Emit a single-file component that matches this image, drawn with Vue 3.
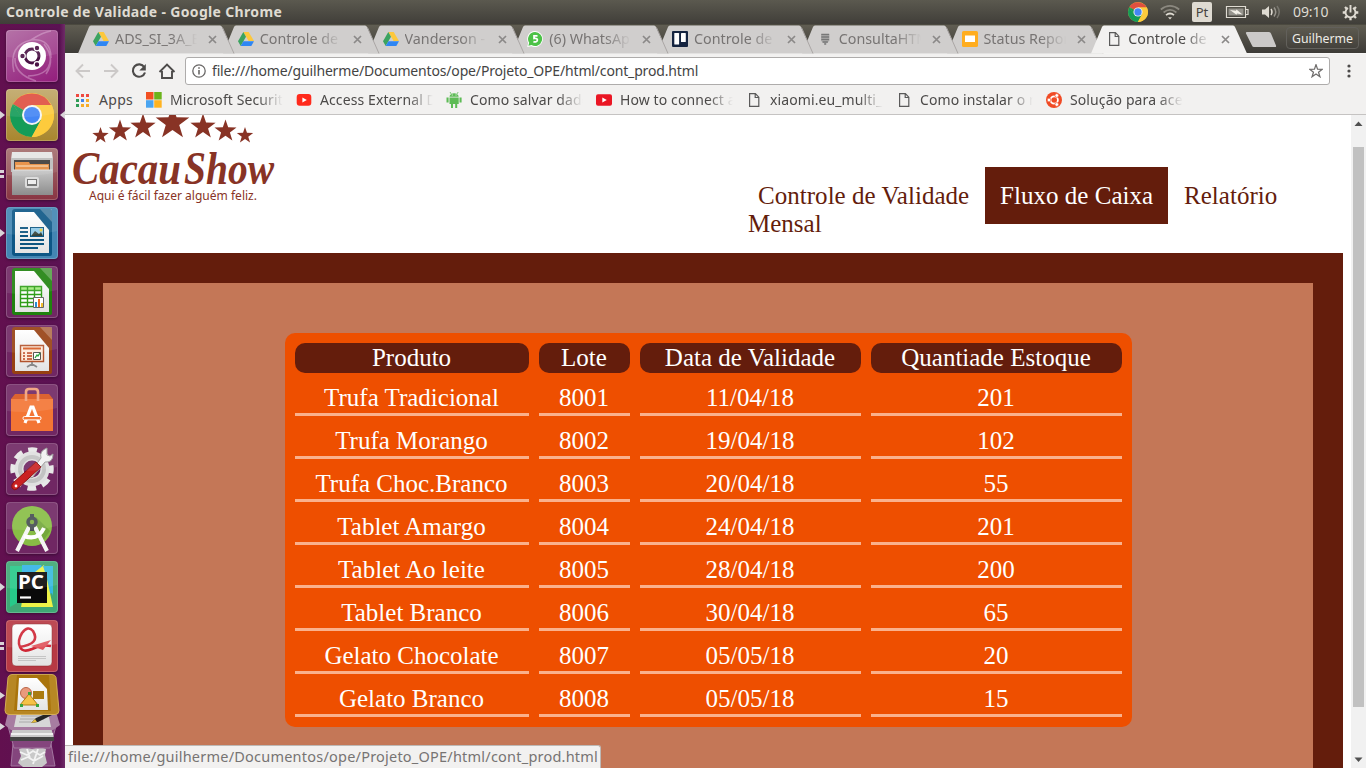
<script setup>
const tabs = [
  { title: 'ADS_SI_3A_B', icon: 'drive' },
  { title: 'Controle de V', icon: 'drive' },
  { title: 'Vanderson - G', icon: 'drive' },
  { title: '(6) WhatsApp', icon: 'whats' },
  { title: 'Controle de V', icon: 'trello' },
  { title: 'ConsultaHTM', icon: 'shield' },
  { title: 'Status Repor', icon: 'slides' },
  { title: 'Controle de V', icon: 'doc', active: true }
]
const bookmarks = [
  { title: 'Microsoft Securit', icon: 'ms' },
  { title: 'Access External D', icon: 'yt' },
  { title: 'Como salvar dado', icon: 'android' },
  { title: 'How to connect a', icon: 'yt2' },
  { title: 'xiaomi.eu_multi_', icon: 'doc' },
  { title: 'Como instalar o m', icon: 'doc' },
  { title: 'Solução para ace', icon: 'ubuntu' }
]
const launchers = [
  { name: 'dash' },
  { name: 'chrome', mark: 'one', focus: true },
  { name: 'files', mark: 'two' },
  { name: 'writer', mark: 'one' },
  { name: 'calc' },
  { name: 'impress' },
  { name: 'software' },
  { name: 'settings' },
  { name: 'studio' },
  { name: 'pycharm', mark: 'one' },
  { name: 'evince', mark: 'two' }
]
const rows = [
  ['Trufa Tradicional', '8001', '11/04/18', '201'],
  ['Trufa Morango', '8002', '19/04/18', '102'],
  ['Trufa Choc.Branco', '8003', '20/04/18', '55'],
  ['Tablet Amargo', '8004', '24/04/18', '201'],
  ['Tablet Ao leite', '8005', '28/04/18', '200'],
  ['Tablet Branco', '8006', '30/04/18', '65'],
  ['Gelato Chocolate', '8007', '05/05/18', '20'],
  ['Gelato Branco', '8008', '05/05/18', '15']
]
const url = 'file:///home/guilherme/Documentos/ope/Projeto_OPE/html/cont_prod.html'
const star = '0,-10 2.3,-3.2 9.5,-3.1 3.8,1.2 5.9,8.1 0,4 -5.9,8.1 -3.8,1.2 -9.5,-3.1 -2.3,-3.2'
const stars = [
  [27.5, 20.6, 0.86], [47, 16, 1.16], [70, 11.8, 1.33], [99.5, 8, 1.77], [130, 11.8, 1.33], [152.5, 16, 1.16], [172, 20.6, 0.86]
]
</script>

<template>
  <div class="desktop">
    <svg class="defs" width="0" height="0">
      <defs>
        <symbol id="drive" viewBox="0 0 16 16">
          <path d="M5.3 1h5.4L16 10h-5.4z" fill="#fdc83c" />
          <path d="M5.3 1 0 10.2 2.7 15 8 5.7z" fill="#3ba360" />
          <path d="M5.4 10.2H16L13.3 15H2.7z" fill="#2e86f3" />
        </symbol>
        <symbol id="whats" viewBox="0 0 16 16">
          <path d="M8 0a8 8 0 1 1-3.6 15.2L.2 16l1-4A8 8 0 0 1 8 0" fill="#fff" />
          <path d="M8 1a7 7 0 1 1-3.5 13L1.4 14.8l.8-3A7 7 0 0 1 8 1" fill="#4cc247" />
          <path d="M10.500 4.800H7v2.700c2.600-.4 3.400.4 3.400 1.600 0 1.700-2 2.300-4 1.500" fill="none" stroke="#fff" stroke-width="1.700" />
        </symbol>
        <symbol id="trello" viewBox="0 0 16 16">
          <rect width="16" height="16" rx="1" fill="#152440" />
          <rect x="2.3" y="2" width="4.8" height="11.5" rx=".6" fill="#fff" />
          <rect x="9" y="2" width="4.8" height="9" rx=".6" fill="#fff" />
        </symbol>
        <symbol id="shield" viewBox="0 0 16 16">
          <path d="M4.3 3.5h7.8M4.3 6h7.8M4.3 8.5h7.8M5.5 11h5.4M7.2 13h2" stroke="#777" stroke-width="1.6" />
          <path d="M4 3h8.4v7L8.2 13 4 10z" fill="#777" opacity=".35" />
        </symbol>
        <symbol id="slides" viewBox="0 0 16 16">
          <rect width="16" height="16" rx="1.6" fill="#ffad1f" />
          <rect x="3" y="4.500" width="10" height="6.500" fill="#fff" />
        </symbol>
        <symbol id="doc" viewBox="0 0 16 16">
          <path d="M3.600 1.600h5.800L12.800 5.200v9.200H3.600zM9.200 1.800v3.700h3.600" fill="none" stroke="#5a5a5a" stroke-width="1.200" />
        </symbol>
        <symbol id="ms" viewBox="0 0 16 16">
          <path d="M0 0h7.5v7.5H0z" fill="#f25022" />
          <path d="M8.2 0h7.5v7.5H8.2z" fill="#6cb41c" />
          <path d="M0 8.2h7.5v7.5H0z" fill="#4aa4f0" />
          <path d="M8.2 8.2h7.5v7.5H8.2z" fill="#ffb320" />
        </symbol>
        <symbol id="yt" viewBox="0 0 16 16">
          <rect x=".7" y="2" width="14.6" height="11.8" rx="3" fill="#ff2a1c" />
          <path d="M6.4 5.4v5L10.8 8z" fill="#fff" />
        </symbol>
        <symbol id="yt2" viewBox="0 0 16 16">
          <rect y="2.2" width="16" height="11.6" rx="2" fill="#ea1624" />
          <path d="M6.3 5.4v5L10.8 8z" fill="#fff" />
        </symbol>
        <symbol id="android" viewBox="0 0 16 16">
          <path d="M3.5 5.5h9.2V12H3.5zM3.5 4.8C3.7 0 12.5 0 12.7 4.8zM.5 5.5h2.1v5H.5zM13.5 5.5h2.1v5h-2.1zM5 11h2v5H5zM9.2 11h2v5h-2z" fill="#5dbb55" />
          <path d="M4 0 5.3 2M12.2 0 10.9 2" stroke="#5dbb55" stroke-width=".8" />
          <path d="M5.8 3h.9M9.6 3h.9" stroke="#fff" />
        </symbol>
        <symbol id="ubuntu" viewBox="0 0 16 16">
          <circle cx="8" cy="8" r="8" fill="#f04a24" />
          <circle cx="8.2" cy="8" r="3.7" fill="none" stroke="#fff" stroke-width="1.8" />
          <circle cx="3" cy="8" r="1.9" fill="#fff" stroke="#f04a24" stroke-width=".7" />
          <circle cx="10.8" cy="3.5" r="1.9" fill="#fff" stroke="#f04a24" stroke-width=".7" />
          <circle cx="10.8" cy="12.5" r="1.9" fill="#fff" stroke="#f04a24" stroke-width=".7" />
        </symbol>
        <symbol id="chromeball" viewBox="-22 -22 44 44">
          <circle r="22" fill="#fbc634" />
          <path d="M0 0-19.05-11A22 22 0 0 1 19.05-10H0z" fill="#e04f3f" />
          <path d="M-19.05-11A22 22 0 0 0 0 22L9 5 0 0-8.7 5z" fill="#149c58" />
          <path d="M-19.05-11-8 7.5 0 0z" fill="#149c58" />
          <path d="M0-10h19.6A22 22 0 0 1-.4 22L9 5z" fill="#fdcb3d" />
          <circle r="10" fill="#f4f4f4" />
          <circle r="8" fill="#4486f5" />
        </symbol>
        <linearGradient id="paper" x2="0" y2="1">
          <stop stop-color="#fff" /><stop offset="1" stop-color="#e3e3e3" />
        </linearGradient>
        <linearGradient id="steel" x2="0" y2="1">
          <stop stop-color="#c9c9c9" /><stop offset="1" stop-color="#8d8d8d" />
        </linearGradient>
      </defs>
    </svg>

    <header class="panel">
      <span class="panel-title">Controle de Validade - Google Chrome</span>
      <div class="indicators">
        <svg width="20" height="20"><use href="#chromeball" /></svg>
        <svg class="wifi" width="20" height="16" fill="none" stroke-width="1.7">
          <path d="M.8 5.5Q10-1.6 19.2 5.5M3.6 8.5Q10 3.2 16.4 8.5" stroke="#8b887f" />
          <path d="M6 11.2Q10 7.8 14 11.2" stroke="#dfdbd2" />
          <path d="M8 13.2h4l-2 2.2z" fill="#dfdbd2" />
        </svg>
        <span class="lang">Pt</span>
        <svg class="battery" width="24" height="14">
          <path d="M1.5 1.5h19v11h-19zM21 4.5h2v5h-2" fill="none" stroke="#dfdbd2" stroke-width="1.2" />
          <path d="M3.500 3.500h15v7h-15z" fill="#96948d" />
          <path d="m5 5 6 .8.500-1.300 6 5-5.500-1-.5 1.200z" fill="#f3f0e8" />
        </svg>
        <svg class="sound" width="20" height="16" fill="none" stroke="#dfdbd2" stroke-width="1.5">
          <path d="M1 5.5h3L8 2v12L4 10.500H1z" fill="#dfdbd2" stroke="none" />
          <path d="M10 5q2 3 0 6" /><path d="M13 3.500q3.500 4.500 0 9" stroke="#98958d" /><path d="M16 2q4.500 6 0 12" stroke="#77756d" />
        </svg>
        <span class="clock">09:10</span>
        <svg class="gear" width="17" height="17" viewBox="-8.500 -8.500 17 17" fill="none" stroke="#dfdbd2">
          <path d="M-2.500-4.500A5 5 0 1 0 2.500-4.500M0-7.500V0" stroke-width="1.900" />
          <path d="M-7.800 0h3M4.800 0h3M0 4.800v3M-5.500 5.500l2-2M5.500 5.500l-2-2M-5.500-5.500l2 2M5.500-5.500l-2 2" stroke-width="2.300" />
        </svg>
      </div>
    </header>

    <div class="workspace">
      <aside class="launcher">
        <div v-for="item in launchers" :key="item.name" class="tile" :class="item.name">
          <i v-if="item.mark === 'one'" class="mark-one"></i>
          <i v-if="item.mark === 'two'" class="mark-two"></i>
          <i v-if="item.focus" class="mark-focus"></i>
          <svg width="52" height="52" viewBox="0 0 52 52">
            <template v-if="item.name === 'dash'">
              <g fill="none" stroke="#e8c4e2" stroke-width="1.600" opacity=".4">
                <path d="M8 42Q2 15 25 10q20-2 20 18M25 10q12-8 20-9M44 25q3 20-22 21M9 28Q8 44 30 51M38 14q12 15 2 30" />
              </g>
              <circle cx="26" cy="26" r="14" fill="#fff" />
              <circle cx="26" cy="26" r="7" fill="none" stroke="#4a1245" stroke-width="3" />
              <g fill="#4a1245" stroke="#fff" stroke-width="1.200"><circle cx="16.500" cy="26" r="2.800" /><circle cx="31" cy="18" r="2.800" /><circle cx="31" cy="34.500" r="2.800" /></g>
            </template>
            <template v-else-if="item.name === 'chrome'">
              <use href="#chromeball" x="4" y="4" width="44" height="44" />
            </template>
            <template v-else-if="item.name === 'files'">
              <path d="M6 4h40l1 8H5z" fill="#e5e5e5" /><path d="M5 10h42v14H5z" fill="#bbb" />
              <path d="M8 12h36v12H8z" fill="#3d3a38" /><path d="M9 14h14l1 2h19v7H9z" fill="#e58a3b" /><path d="M10 18h32" stroke="#fbe6c9" />
              <path d="M7 22h38l2-1v26H6V21z" fill="url(#steel)" /><path d="M7 22h39" stroke="#ddd" />
              <rect x="20" y="30" width="12" height="9" rx="1" fill="#777" stroke="#ddd" stroke-width="2" /><path d="M22 32h8v4h-8z" fill="#eee" />
            </template>
            <template v-else-if="['writer', 'calc', 'impress'].includes(item.name)">
              <path class="frame" d="M9 2h35q2 0 2 2v43q0 2-2 2H9q-3 0-3-3V5q0-3 3-3z" />
              <path d="M34 2h12v13z" fill="#fff" opacity=".25" />
              <path d="M9 5h19l15 18v23H9z" fill="url(#paper)" />
              <g v-if="item.name === 'writer'">
                <path d="M14 21h8M14 25h8M14 29h8M14 33h24M14 37h24M14 41h18" stroke="#0d5580" stroke-width="2" />
                <path d="M24 20h14v10H24z" fill="#0d5580" /><path d="M25 21h12v8H25z" fill="#8dc9e7" /><path d="m25 29 4-5 4 3 2-2 2 4z" fill="#35423a" /><circle cx="35" cy="23" r="1.500" fill="#eccb37" />
              </g>
              <g v-else-if="item.name === 'calc'">
                <path d="M14 20h22v21H14z" fill="#fff" /><path d="M14 20h22v5H14z" fill="#a1ec7c" />
                <path d="M14.500 20.500h21v20h-21zM14.500 24.500h21M14.500 28.500h21M14.500 32.500h21M14.500 36.500h21M21.500 20v21M28.500 20v21" fill="none" stroke="#2f9d18" stroke-width="1.400" />
                <path d="M27.500 31.500h10v10h-10z" fill="#fff" stroke="#666" /><path d="M29 36h2v5h-2z" fill="#2b8ed0" /><path d="M32 33h2v8h-2z" fill="#f36c1a" /><path d="M35 37h2v4h-2z" fill="#f2bd2b" />
              </g>
              <g v-else>
                <path d="M14.500 20.500h23v16h-23z" fill="#fdeada" stroke="#b1522b" stroke-width="1.400" /><path d="M17 23.500h18" stroke="#d75c24" stroke-width="2" />
                <path d="M17 28h2M17 31h2M17 34h2M21 28h5M21 31h5M21 34h5" stroke="#b9421d" stroke-width="1.600" />
                <path d="M27.500 27.500h7v7h-7z" fill="#fff" stroke="#555" /><path d="m29 33 2-3 1 1 2-3" fill="none" stroke="#28a33f" stroke-width="1.300" />
                <path d="M26 37v2l-5 3M26 39l5 3" fill="none" stroke="#888" stroke-width="1.800" />
              </g>
            </template>
            <template v-else-if="item.name === 'software'">
              <path d="M5 15h7l2-3h25l2 3h6v32H5z" fill="#f37534" /><path d="M5 15h42l-4-5H9z" fill="#d9541c" />
              <path d="M20 17V8q0-3 3-3h6q3 0 3 3v9" fill="none" stroke="#f1a07a" stroke-width="2.600" />
              <path d="m19 39 6-16h2l6 16" fill="none" stroke="#fff" stroke-width="3.200" /><rect x="17" y="32.500" width="18" height="3.400" rx="1.500" fill="#f37534" stroke="#fff" />
            </template>
            <template v-else-if="item.name === 'settings'">
              <circle cx="26" cy="26" r="18.500" fill="none" stroke="#e7e7e7" stroke-width="6.500" stroke-dasharray="8.500 6.030" stroke-dashoffset="4.250" />
              <circle cx="26" cy="26" r="13" fill="none" stroke="#e0e0e0" stroke-width="9" /><circle cx="26" cy="26" r="12" fill="none" stroke="#c2c2c2" stroke-width="4" />
              <path d="m22 32 13-17q-2-7 6-10l0 7 3 1 3-2q0 9-8 8L26 35z" fill="#f1f1f1" stroke="#999" />
              <path d="m30 19 5 5-24 22q-3 2-5-1-1-3 1-5z" fill="#ca2222" stroke="#8c1212" /><circle cx="10" cy="43" r="1.400" fill="#fff" />
            </template>
            <template v-else-if="item.name === 'studio'">
              <circle cx="26" cy="24" r="20" fill="#88bd45" /><path d="m30 15 14 14-7 10-13-13z" fill="#578a30" opacity=".4" />
              <path d="m23 25-12 24M29 25l12 24" stroke="#f5f5f5" stroke-width="4" /><path d="M18 34q14 5 20-8" fill="none" stroke="#fff" stroke-width="4" />
              <path d="M24 12h4v5h-4zM24 25h4v4h-4z" fill="#464d52" /><circle cx="26" cy="20" r="4" fill="#80ad45" stroke="#464d52" stroke-width="3.500" />
            </template>
            <template v-else-if="item.name === 'pycharm'">
              <path d="M4 5h27L11 42 4 46z" fill="#27c989" /><path d="M16 4h19l12 28-32 7z" fill="#33b4e7" /><path d="m20 18 18-14 9 42H15z" fill="#edf247" /><path d="M37 5h10v30z" fill="#37b9de" />
              <path d="M11 11h30v31H11z" fill="#0a0a0a" />
              <text x="12" y="28" class="pc" textLength="26" lengthAdjust="spacingAndGlyphs">PC</text><path d="M14 36.500h11" stroke="#fff" stroke-width="2.200" />
            </template>
            <template v-else>
              <rect x="6" y="4" width="40" height="42" rx="4" fill="url(#paper)" stroke="#8a2626" stroke-opacity=".5" />
              <path d="M13 27Q35 24 27 11q-5-6-11 2-5 8-2 14 3 6 12 2 10-5 19-3" fill="none" stroke="#cf2635" stroke-width="2.600" /><path d="m25 26 20-6-8 10z" fill="#e0545c" />
              <path d="M12 36.500h28M12 38.500h28M12 40.500h18" stroke="#c5c5c5" />
            </template>
            <path d="M1 1h50v23Q26 30 1 27z" fill="#fff" opacity=".09" />
          </svg>
        </div>
        <svg class="stack" width="65" height="94" viewBox="0 0 65 94">
          <path d="M13 70h38l4 22H11z" fill="#84457d" stroke="#a376a0" />
          <path d="m19 75 6-2 7 2 8-2 6 2-1 6 2 8-5 4H23l-5-4 3-7z" fill="#c9c9c9" />
          <path d="m20 78 7 3 6-4 7 4 5-3M21 86l7-3 6 4 9-5M27 75l3 9M38 75l-5 15" fill="none" stroke="#f3f3f3" stroke-width="1.800" />
          <path d="M8 52h48l-6 22H14z" fill="#84457d" stroke="#a376a0" /><path d="M13 53h38l3 12H10z" fill="#c9c9c9" /><path d="M10 63h44v4H10z" fill="#444" /><path d="M11 60h42" stroke="#eee" stroke-width="2" />
          <path d="M8 38h48l4 13-7 5H11l-6-5z" fill="#a77ca1" /><path d="M17 38h31l3 15H14z" fill="#d7d7d7" /><path d="M21 42h22M20 45h24M19 48h12" stroke="#aaa" /><path d="m31 49 5-5 14-6 2 3-14 7z" fill="#252525" /><path d="m31 49 4-4 2 3z" fill="#e4bd40" />
          <path d="M12 .5h40q3 0 4 3l3 33q0 4-4 4H9q-4 0-4-4l3-33q1-3 4-3z" fill="#b78724" stroke="#d5ad56" />
          <path d="M17 1h32l2 36H14z" fill="#a9740c" /><path d="M19 4h18l10 11 1 21H17z" fill="url(#paper)" />
          <circle cx="26" cy="19" r="5.500" fill="#e99a7d" stroke="#bb6547" /><path d="M33 17h11v8H33z" fill="#ab7b10" /><path d="m29 20 9 11H20z" fill="#f5c247" stroke="#b27b13" /><path d="M28 18h3v3h-3zM20 30h3v3h-3zM36 30h3v3h-3z" fill="#38a53d" />
          <path d="m0 18 5 3.500L0 25zM0 49l5 3.500L0 56z" fill="#d9d4d8" />
        </svg>
      </aside>

      <div class="browser">
        <nav class="tabstrip">
          <div v-for="(tab, i) in tabs" :key="i" class="tab" :class="{ active: tab.active }" :style="{ zIndex: tab.active ? 20 : 10 - i }">
            <svg class="tab-shape" width="158" height="29">
              <path class="tab-fill" d="M0 28.500 11 2Q11.500 .5 13 .5H142Q143.500 .5 144 2L156 28.500z" />
              <path class="tab-line" d="M144.500 2.500 156 28.500" />
            </svg>
            <svg class="favicon" width="16" height="16"><use :href="'#' + tab.icon" /></svg>
            <span class="tab-title">{{ tab.title }}</span>
            <svg class="close" width="9" height="9"><path d="m1 1 7 7M8 1 1 8" stroke="#8b8988" stroke-width="1.700" /></svg>
          </div>
          <svg class="new-tab" width="34" height="17"><path d="M2 1h22q1.500 0 2 1.500l5 12q.5 1.500-1 1.500H9q-1.500 0-2-1.500L1 2.500Q.5 1 2 1z" fill="#cbc9c8" /></svg>
          <span class="profile">Guilherme</span>
        </nav>

        <div class="toolbar">
          <svg width="16" height="16" fill="none" stroke="#ccc9c8" stroke-width="1.900"><path d="M15 8H2M8 1.500 1.500 8 8 14.500" /></svg>
          <svg width="16" height="16" fill="none" stroke="#ccc9c8" stroke-width="1.900"><path d="M1 8h13M8 1.500 14.500 8 8 14.500" /></svg>
          <svg width="16" height="16" fill="none" stroke="#4d4b4a" stroke-width="2.100"><path d="M13.300 4.200A6.200 6.200 0 1 0 14 9.500" /><path d="M14.800 1v6.500H8.300z" fill="#4d4b4a" stroke="none" /></svg>
          <svg width="18" height="16" fill="none" stroke="#4d4b4a" stroke-width="1.900"><path d="M1.500 9 9 1.500 16.500 9M4 8v7h10V8" /></svg>
          <div class="address">
            <svg width="14" height="14" fill="none" stroke="#6a6867" stroke-width="1.300"><circle cx="7" cy="7" r="6.200" /><path d="M7 6v4.500M7 3.300v1.500" stroke-width="1.600" /></svg>
            <span class="url">{{ url }}</span>
            <svg class="fav" width="14" height="14" viewBox="-10.500 -11 21 21"><polygon :points="star" fill="none" stroke="#706e6d" stroke-width="1.900" /></svg>
          </div>
          <svg class="menu" width="4" height="14" fill="#4d4b4a"><circle cx="2" cy="2" r="1.600" /><circle cx="2" cy="7" r="1.600" /><circle cx="2" cy="12" r="1.600" /></svg>
        </div>

        <div class="bookmarks">
          <svg class="apps-icon" width="13" height="13">
            <path d="M0 0h3v3H0zM5 0h3v3H5zM10 0h3v3h-3z" fill="#ef4940" /><path d="M0 5h3v3H0zM0 10h3v3H0z" fill="#2f9c57" /><path d="M5 5h3v3H5z" fill="#4385e9" /><path d="M10 5h3v3h-3zM5 10h3v3H5zM10 10h3v3h-3z" fill="#f7ac27" />
          </svg>
          <span class="apps-label">Apps</span>
          <div v-for="(b, i) in bookmarks" :key="i" class="bookmark">
            <svg width="16" height="16"><use :href="'#' + b.icon" /></svg>
            <span class="bookmark-title">{{ b.title }}</span>
          </div>
        </div>

        <div class="viewport">
          <main class="page">
            <div class="masthead">
              <svg class="logo" width="203" height="93" fill="#883325">
                <polygon v-for="(s, i) in stars" :key="i" :points="star" :transform="`translate(${s[0]} ${s[1]}) scale(${s[2]})`" />
                <text x="-1" y="68.500" class="brand" textLength="109" lengthAdjust="spacingAndGlyphs">Cacau</text>
                <text x="111" y="68.500" class="brand" textLength="90" lengthAdjust="spacingAndGlyphs">Show</text>
                <text x="16" y="85" class="tagline" textLength="168" lengthAdjust="spacingAndGlyphs">Aqui é fácil fazer alguém feliz.</text>
              </svg>
              <div class="menu-wrap">
                <div class="links">
                  <a class="validade">Controle de Validade</a>
                  <a class="selected">Fluxo de Caixa</a>
                  <a class="relatorio">Relatório</a>
                </div>
                <a class="mensal">Mensal</a>
              </div>
            </div>
            <section class="board">
              <div class="stock">
                <div class="th">Produto</div>
                <div class="th">Lote</div>
                <div class="th">Data de Validade</div>
                <div class="th">Quantiade Estoque</div>
                <template v-for="row in rows" :key="row[0]">
                  <div v-for="(cell, c) in row" :key="c" class="td">{{ cell }}</div>
                </template>
              </div>
            </section>
          </main>
          <div class="scrollbar">
            <svg width="15" height="17"><path d="m3.500 11 4-4.500 4 4.500z" fill="#505050" /></svg>
            <div class="thumb"></div>
            <svg class="down" width="15" height="17"><path d="m3.500 6.500 4 4.500 4-4.500z" fill="#505050" /></svg>
          </div>
          <div class="status"><span>{{ url }}</span></div>
        </div>
      </div>
    </div>
  </div>
</template>

<style>
html, body { margin: 0; overflow: hidden; }
</style>

<style scoped>
* { box-sizing: border-box; }
.desktop { width: 1366px; height: 768px; display: flex; flex-direction: column; overflow: hidden; font-family: "Noto Sans", "Open Sans", sans-serif; font-size: 13.500px; }
.defs { position: absolute; }
svg { display: block; flex: none; }
.panel { height: 24px; flex: none; display: flex; align-items: center; justify-content: space-between; padding: 0 7px 0 6px; background: linear-gradient(#5b594f, #403e39); color: #dfdbd2; }
.panel-title { font-weight: bold; font-size: 14px; letter-spacing: .34px; line-height: 22px; white-space: nowrap; }
.indicators { display: flex; align-items: center; }
.wifi { margin-left: 12px; }
.lang { margin-left: 12px; width: 20px; height: 20px; border-radius: 2px; background: #dfdbd2; color: #45433e; font-size: 13px; line-height: 20px; text-align: center; }
.battery { margin-left: 13px; }
.sound { margin-left: 12px; }
.clock { margin-left: 12px; width: 37px; line-height: 22px; font-size: 14px; letter-spacing: -.1px; white-space: nowrap; }
.gear { margin-left: 12px; }
.workspace { flex: 1; min-height: 0; display: flex; }
.launcher { width: 65px; flex: none; background: linear-gradient(90deg, #62104f, #5b1253 92%, #6e2b67); display: flex; flex-direction: column; align-items: flex-start; padding-top: 6px; overflow: hidden; position: relative; }
.tile { width: 52px; height: 52px; margin: 0 0 7px 6px; flex: none; border-radius: 4px; position: relative; background: #702763; box-shadow: inset 0 0 0 1px rgba(255, 255, 255, .2), 0 1px 3px rgba(0, 0, 0, .35); }
.dash { background: linear-gradient(150deg, #ae659f, #931d7c); }
.chrome { background: linear-gradient(#c0a768, #a8862e); }
.files { background: linear-gradient(#a46e6e, #893543); }
.writer { background: #4385b3; }
.pycharm { background: #3fa875; }
.evince { background: #b73944; margin-bottom: 2px; }
.pc { font-family: "Noto Sans", sans-serif; font-weight: bold; font-size: 19px; fill: #fff; }
.frame { fill: #0d5685; }
.calc .frame { fill: #1f820e; }
.impress .frame { fill: #974012; }
.mark-one, .mark-two, .mark-focus { position: absolute; left: -6px; top: 22px; }
.mark-one { border-left: 5px solid #d9d4d8; border-top: 4px solid transparent; border-bottom: 4px solid transparent; }
.mark-two { width: 4px; height: 8px; top: 22px; border-top: 3px solid #d9d4d8; border-bottom: 3px solid #d9d4d8; }
.mark-focus { left: auto; right: -7px; border-right: 5px solid #d9d4d8; border-top: 4px solid transparent; border-bottom: 4px solid transparent; }
.stack { flex: none; }
.browser { width: 1301px; display: flex; flex-direction: column; background: #f2f1f0; }
.tabstrip { height: 29px; flex: none; display: flex; align-items: flex-start; padding-left: 13px; background: linear-gradient(#605d52, #3d3b37); border-top: 1px solid #4b493f; }
.tab { width: 144.750px; height: 28px; flex: none; position: relative; display: flex; align-items: center; padding-left: 15px; color: #777473; }
.tab-shape { position: absolute; left: 0; top: 0; z-index: -1; }
.tab-fill { fill: #d0cecd; }
.tab-line { fill: none; stroke: #aaa6a5; }
.active { color: #4c4a49; }
.active .tab-fill { fill: #f2f1f0; }
.active .tab-line { stroke: none; }
.tab-title { margin-left: 6px; width: 85px; overflow: hidden; white-space: nowrap; mask-image: linear-gradient(90deg, #000 56px, transparent 82px); font-size: 14.300px; line-height: 20px; }
.close { margin-left: 8px; }
.new-tab { margin: 6px 0 0 9px; }
.profile { margin: 2px 0 0 7px; width: 73px; height: 22px; border: 1px solid #62605b; border-radius: 4px; color: #eeece6; font-size: 12.300px; line-height: 21px; text-align: center; flex: none; }
.toolbar { height: 35px; flex: none; display: flex; align-items: center; padding-left: 10px; border-top: 1px solid #f7f6f5; }
.toolbar > svg:nth-child(2), .toolbar > svg:nth-child(3) { margin-left: 12px; }
.toolbar > svg:nth-child(4) { margin-left: 11px; }
.address { margin-left: 9px; width: 1145px; height: 28px; background: #fff; border: 1px solid #aeacab; border-radius: 3px; display: flex; align-items: center; padding: 0 6px; color: #444; }
.url { margin-left: 6px; font-size: 14px; line-height: 20px; white-space: nowrap; letter-spacing: -.160px; margin-top: -1px; }
.fav { margin-left: auto; }
.toolbar .menu { margin-left: 17px; }
.bookmarks { height: 27px; flex: none; display: flex; align-items: center; padding: 0 0 2px 11px; border-bottom: 1px solid #c5c3c2; color: #4c4a49; font-size: 14px; }
.apps-label { width: 36px; margin: 0 11px 0 10px; line-height: 20px; letter-spacing: .3px; }
.bookmark { width: 150px; flex: none; display: flex; align-items: center; }
.bookmark-title { margin-left: 8px; width: 113px; line-height: 20px; letter-spacing: .1px; white-space: nowrap; overflow: hidden; mask-image: linear-gradient(90deg, #000 88px, transparent 113px); }
.viewport { flex: 1; min-height: 0; position: relative; background: #fff; display: flex; }
.page { width: 1286px; padding: 0 8px; overflow: hidden; font-family: "Liberation Serif", serif; font-size: 25px; line-height: 28px; }
.masthead { height: 138px; display: flex; }
.logo { overflow: visible; }
.brand { font-family: "Liberation Serif", serif; font-weight: bold; font-style: italic; font-size: 46px; }
.tagline { font-family: "Noto Sans", sans-serif; font-size: 12.500px; }
.menu-wrap { margin: 52px 0 0 472px; color: #641d0c; white-space: nowrap; }
.links { display: flex; align-items: center; height: 57px; padding-left: 10px; }
.validade { width: 227px; letter-spacing: .03px; }
.selected { width: 183px; height: 57px; padding: 15px; background: #641d0c; color: #fff; letter-spacing: .03px; }
.relatorio { margin-left: 16px; letter-spacing: .04px; }
.mensal { display: block; margin-top: -14px; }
.board { width: 1270px; height: 600px; background: #c47757; border: 30px solid #641d0c; padding: 50px 0 0 182px; }
.stock { width: 847px; padding: 10px; border-radius: 10px; background: #ee4f00; display: grid; grid-template-columns: 234px 91px 221px 251px; gap: 10px; color: #fff; text-align: center; white-space: nowrap; }
.th { height: 30px; padding: 1px 2px 1px 1px; background: #641d0c; border-radius: 10px; }
.td { height: 33px; padding: 1px 2px 1px 1px; border-bottom: 3px solid #fab18c; }
.scrollbar { width: 15px; background: #f1f1f1; display: flex; flex-direction: column; align-items: center; }
.thumb { width: 11px; height: 560px; margin-top: 15px; background: #c1c1c1; }
.down { margin-top: auto; }
.status { position: absolute; left: 0; bottom: 0; width: 536px; height: 23px; background: #f2f1f0; border: 1px solid #bdb9b6; border-left: 0; border-bottom: 0; border-top-right-radius: 3px; padding-left: 3px; font-size: 14.500px; letter-spacing: .220px; line-height: 21px; color: #777473; white-space: nowrap; }
</style>
